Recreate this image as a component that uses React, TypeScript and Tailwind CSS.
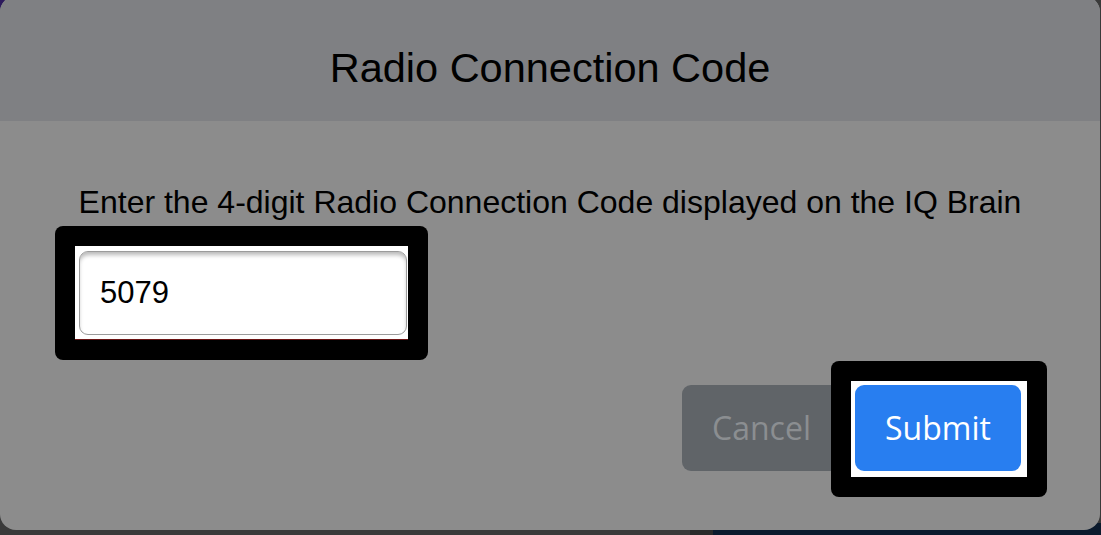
import React from 'react';

const sans = { fontFamily: '"Liberation Sans", Arial, sans-serif' };

const App: React.FC = () => {
  return (
    <div className="relative h-[535px] w-[1101px] overflow-hidden bg-[#3a3a3a]">
      {/* page behind the dialog */}
      <div className="absolute left-0 top-0 h-6 w-6 bg-[#2c1a5c]" />
      <div className="absolute bottom-0 left-[690px] h-3 w-[23px] bg-[#2a2a2a]" />
      <div className="absolute bottom-0 left-[713px] right-0 h-3 bg-[#0b1a2d]" />

      <div className="relative z-10 -mt-1 flex h-[534px] w-[1100px] flex-col overflow-hidden rounded-[16px] bg-[#8c8c8c]">
        <div className="h-[125px] shrink-0 bg-[#7f8083] pt-[51px] text-center">
          <h2 className="text-[41.5px] leading-none text-black" style={sans}>
            Radio Connection Code
          </h2>
        </div>

        <div className="flex flex-1 flex-col pt-[65px]">
          <p className="text-center text-[32px] leading-none text-black" style={sans}>
            Enter the 4-digit Radio Connection Code displayed on the IQ Brain
          </p>

          <div className="ml-[55px] mt-[8px] w-fit rounded-[8px] bg-black p-[20px]">
            <div className="border-b border-[#6a1414] bg-white pb-[4px] pl-[4px] pr-[1px] pt-[5px]">
              <input
                readOnly
                value="5079"
                className="h-[84px] w-[328px] rounded-[9px] border-[1.5px] border-[#9b9b9b] bg-white pl-[20px] text-[31px] text-black shadow-[inset_0_4px_4px_-1px_rgba(0,0,0,0.28)] outline-none"
                style={sans}
              />
            </div>
          </div>

          <div className="mr-[53px] mt-px flex items-start justify-end">
            <button
              className="-mr-[10px] mt-[24px] h-[86px] w-[159px] rounded-[9px] bg-[#606468] text-[32px] text-[#8b8e91]"
              style={{ fontFamily: '"Open Sans", "Noto Sans", sans-serif' }}
            >
              Cancel
            </button>
            <div className="rounded-[8px] bg-black p-[20px]">
              <div className="bg-white pb-[6px] pl-[4px] pr-[6px] pt-[4px]">
                <button
                  className="h-[86px] w-[166px] rounded-[9px] bg-[#287ef0] text-[32px] text-white"
                  style={{ fontFamily: '"Open Sans", "Noto Sans", sans-serif' }}
                >
                  Submit
                </button>
              </div>
            </div>
          </div>
        </div>
      </div>
    </div>
  );
};

export default App;
